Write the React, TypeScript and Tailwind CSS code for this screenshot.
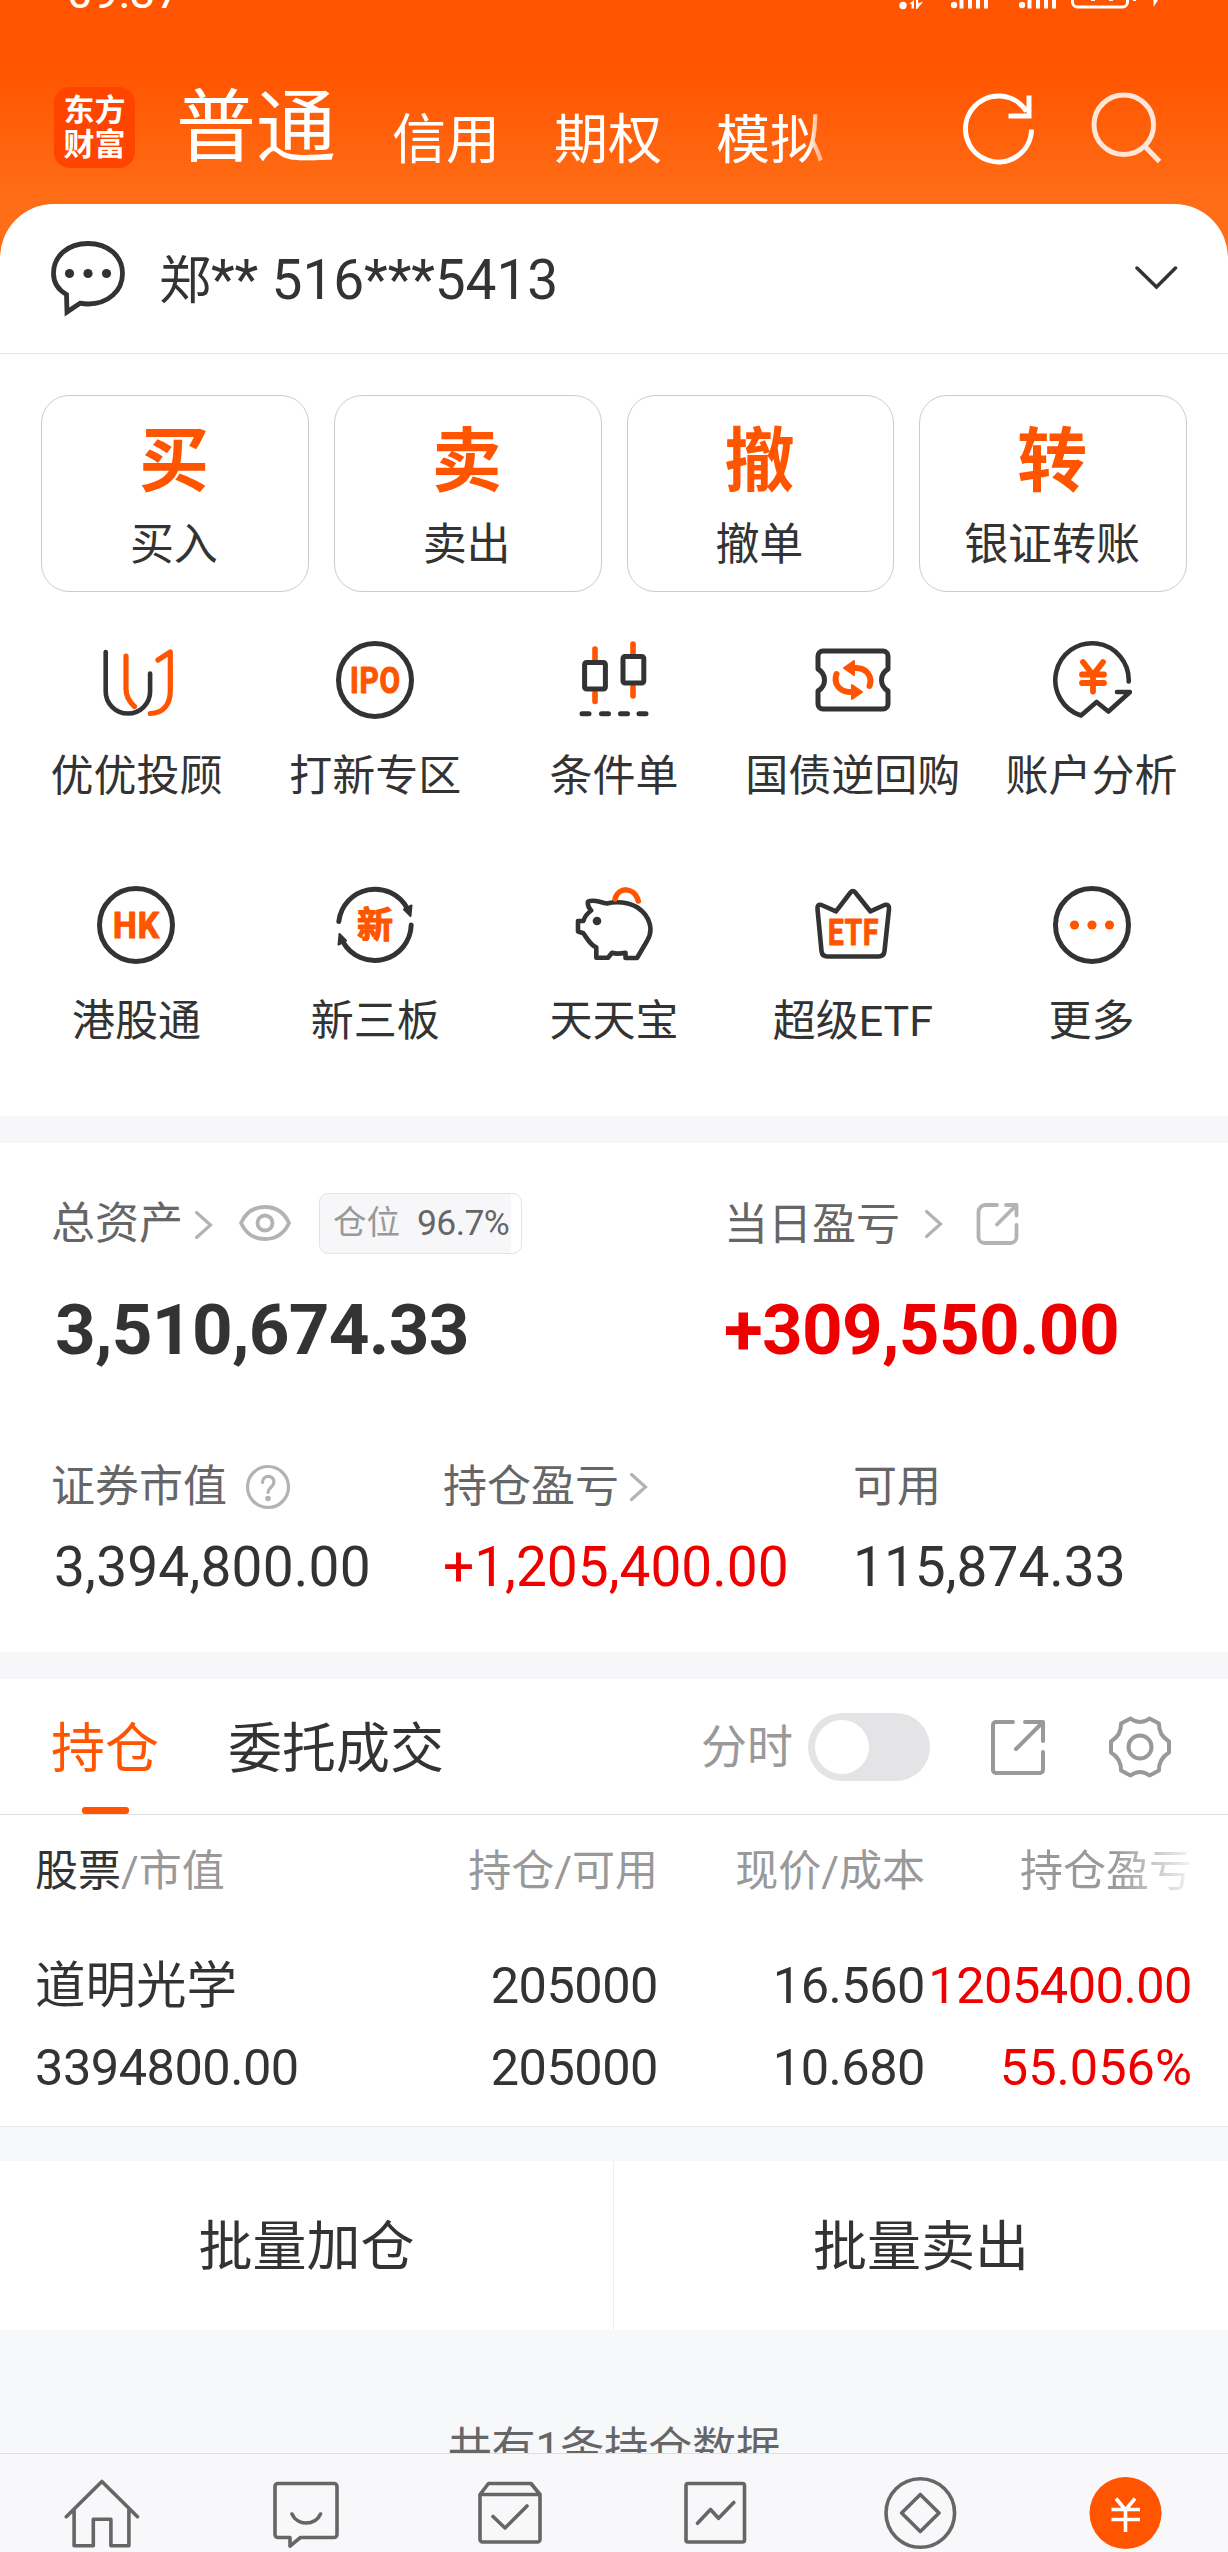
import type { ReactNode } from 'react'

const ORANGE = '#ff5500'
const DARK = '#333333'

function Icon({ children, stroke = DARK, width = 5 }: { children: ReactNode; stroke?: string; width?: number }) {
  return (
    <svg
      viewBox="0 0 80 80"
      className="w-20 h-20 shrink-0"
      fill="none"
      stroke={stroke}
      strokeWidth={width}
      strokeLinecap="round"
      strokeLinejoin="round"
    >
      {children}
    </svg>
  )
}

function IconText({ children, y, length, spacing = 0 }: { children: string; y: number; length: number; spacing?: number }) {
  return (
    <text
      x={40 + spacing / 2}
      y={y}
      textAnchor="middle"
      textLength={length}
      lengthAdjust="spacingAndGlyphs"
      letterSpacing={spacing}
      fontSize={36}
      fontWeight={700}
      fill={ORANGE}
      stroke={ORANGE}
      strokeWidth={1.2}
    >
      {children}
    </text>
  )
}

function ChevronRight() {
  return (
    <svg viewBox="0 0 20 32" className="w-5 h-8 shrink-0" fill="none" stroke="#b3b3b3" strokeWidth={3.2} strokeLinecap="round">
      <path d="M2.5 3.5 16.5 16 2.5 28.5" />
    </svg>
  )
}

const actions = [
  { mark: '买', label: '买入' },
  { mark: '卖', label: '卖出' },
  { mark: '撤', label: '撤单' },
  { mark: '转', label: '银证转账' },
]

const services = [
  {
    label: '优优投顾',
    icon: (
      <Icon width={4.6}>
        <path d="M9.7 12v39.5a22.2 22 0 0 0 44.4 0V33.5" />
        <path d="M30 16v33c0 8 3 12.5 8.5 17.5M62 20l12.3-8v39c0 13-7 22.5-20 22.5" stroke={ORANGE} strokeWidth={5.2} />
      </Icon>
    ),
  },
  {
    label: '打新专区',
    icon: (
      <Icon>
        <circle cx={40} cy={40} r={36.5} />
        <IconText y={53} length={51} spacing={1}>IPO</IconText>
      </Icon>
    ),
  },
  {
    label: '条件单',
    icon: (
      <Icon>
        <path d="M21 9v11M21 53v8.5M59 4v10M59 47v9" stroke={ORANGE} strokeWidth={5.6} />
        <rect x={10.6} y={22.5} width={20.8} height={26.5} rx={2} />
        <rect x={49} y={16.5} width={20.8} height={26.5} rx={2} />
        <path d="M8 73.7h7M27.5 73.7h7M46.5 73.7h7M65 73.7h7" />
      </Icon>
    ),
  },
  {
    label: '国债逆回购',
    icon: (
      <Icon>
        <path d="M10 11h60a5 5 0 0 1 5 5v13q-6.5 4-6.5 11t6.5 11v13a5 5 0 0 1-5 5H10a5 5 0 0 1-5-5V51q6.5-4 6.5-11T5 29V16a5 5 0 0 1 5-5z" />
        <g stroke={ORANGE} strokeWidth={6}>
          <path d="M40 28h3c10 0 17 8 13.5 18" />
          <path d="M31 28l10-7v14z" fill={ORANGE} strokeWidth={2} />
          <path d="M40 52h-3c-10 0-17-8-13.5-18" />
          <path d="M49 52l-10-7v14z" fill={ORANGE} strokeWidth={2} />
        </g>
      </Icon>
    ),
  },
  {
    label: '账户分析',
    icon: (
      <Icon width={4.6}>
        <path d="M76.7 41.5A36.7 37 0 1 0 29 75.5L44.6 62 56.4 71.5 78 52H65" />
        <path d="M31 22l10 13 10-13M30 34.5h22M30 43h22M41 35v16.5" stroke={ORANGE} strokeWidth={5.8} />
      </Icon>
    ),
  },
  {
    label: '港股通',
    icon: (
      <Icon>
        <circle cx={40} cy={40} r={36.5} />
        <IconText y={53} length={47} spacing={1}>HK</IconText>
      </Icon>
    ),
  },
  {
    label: '新三板',
    icon: (
      <Icon>
        <path d="M3.8 36.5A36.5 36.5 0 0 1 72 23M76.2 40A36.5 36.5 0 0 1 8 57" />
        <path d="M69 24.5 76.5 20.5 75.5 31zM11 55.5 3.5 59.5 4.5 49z" fill={DARK} strokeWidth={2} />
        <IconText y={53} length={36}>新</IconText>
      </Icon>
    ),
  },
  {
    label: '天天宝',
    icon: (
      <Icon width={4.6}>
        <path d="M14 16.5C20 14 26 17.5 33 18.5C42 16 55 17 63.5 22.5C76 31 80 45 73 56L63 73H51.5V67.8Q43 69.5 38 67.8L34 72.7H22.3V62.3C16 60 13 53 9.4 48.3L4 46.5V36H9.4Q11 30 17.2 25.5Q13 21 14 16.5z" />
        <path d="M41 14C44 2 60 1 64.3 16" stroke={ORANGE} strokeWidth={5.5} />
        <circle cx={23} cy={36} r={4.3} fill={DARK} stroke="none" />
      </Icon>
    ),
  },
  {
    label: '超级ETF',
    icon: (
      <Icon width={4.6}>
        <path d="M4.5 24q-.5-5 4-4L23 26.3 37.5 7.5q2.4-3 4.8 0L57.3 26.3 71.5 20q5-1 4.5 4L71.5 66q-.5 5.5-6 5.5h-51q-5.5 0-6-5.5z" />
        <IconText y={60} length={51} spacing={1}>ETF</IconText>
      </Icon>
    ),
  },
  {
    label: '更多',
    icon: (
      <Icon>
        <circle cx={40} cy={40} r={36.5} />
        <g fill={ORANGE} stroke="none">
          <circle cx={22.5} cy={40} r={4.6} />
          <circle cx={40} cy={40} r={4.6} />
          <circle cx={57.5} cy={40} r={4.6} />
        </g>
      </Icon>
    ),
  },
]

const navIcons = [
  <path key="home" d="M4.3 43.7 39.9 8.5 75.5 43.7M12.1 37v35.7h19.2V46.3h17.6v26.4h18V37" />,
  <path key="chat" d="M11 10.5h56a3 3 0 0 1 3 3v48a3 3 0 0 1-3 3H33.5L23 73v-8.5H11a3 3 0 0 1-3-3v-48a3 3 0 0 1 3-3zM25 41c5 12 23 12 28.5 0" />,
  <path key="box" d="M8 21.5h60v45a2.5 2.5 0 0 1-2.5 2.5h-55A2.5 2.5 0 0 1 8 66.5zL16.5 10.5h42.5L68 21.5M21 43.5 33 55 55 33" />,
  <path key="chart" d="M12 10.5h54.5a2 2 0 0 1 2 2V67a2 2 0 0 1-2 2H12a2 2 0 0 1-2-2V12.5a2 2 0 0 1 2-2zM21.5 50.3 34.5 36.5 42.5 45.3 57.8 29.5" />,
  <path key="diamond" d="M5 40a34.3 34.3 0 1 0 68.6 0a34.3 34.3 0 1 0-68.6 0zM39.3 21.5 58 40 39.3 58.5 20.6 40z" />,
]

function SignalBars() {
  return (
    <svg viewBox="0 0 38 10" className="w-[38px] h-[10px]" fill="white">
      <circle cx={3} cy={5} r={3.2} />
      <path d="M8.5 0h4v8.5h-4zM17 0h4v8.5h-4zM25 0h4v8.5h-4zM33 0h4v8.5h-4z" />
    </svg>
  )
}

function Header() {
  return (
    <header className="h-[260px] bg-[linear-gradient(to_bottom,#ff5500_0,#ff5500_70px,#ff6d17_200px)] text-white">
      <div className="flex items-end h-[10px] overflow-hidden pl-[67px] pr-[73px]">
        <span className="text-[46px] leading-[20px] h-[10px] -translate-y-[18px]">09:37</span>
        <svg viewBox="0 0 24 10" className="w-6 h-[10px] ml-auto mr-[28px]" fill="white">
          <circle cx={4} cy={5.5} r={3.7} />
          <path d="M10 4 15 0v8.5h-2.5V4zM17 0h2v3l5-1-6 7h-1z" />
        </svg>
        <SignalBars />
        <div className="w-[30px]" />
        <SignalBars />
        <svg viewBox="0 0 84 10" className="w-[84px] h-[10px] ml-[14px] overflow-visible" fill="none" stroke="white" strokeWidth={3}>
          <path d="M1.5-4v6a5 5 0 0 0 5 5h45a5 5 0 0 0 5-5v-6" />
          <path d="M20 0h4M38 0h4M62 0h3" strokeWidth={2} />
          <path d="M87 0 82.5 7V0z" fill="white" stroke="none" />
        </svg>
      </div>

      <div className="flex items-end h-[81px] mt-[77px] pl-[54px] pr-[64px]">
        <div className="w-[81px] h-[81px] rounded-[16px] bg-[#ff4400] pt-[7px] text-center text-[31px] leading-[34px] font-bold">
          东方
          <br />
          财富
        </div>
        <div className="flex items-end ml-[41px] leading-none">
          <span className="text-[80px]">普通</span>
          <span className="text-[54px] ml-[56px]">信用</span>
          <span className="text-[54px] ml-[54px]">期权</span>
          <span className="text-[54px] ml-[54px] [mask-image:linear-gradient(to_right,#000_86%,rgba(0,0,0,0.55)_94%)]">模拟</span>
        </div>
        <div className="flex ml-auto gap-[46px]">
          <Icon stroke="white">
            <path d="M73.5 41.5A33 33 0 1 1 68.5 23.5M71 7.5V28H50.5" strokeLinecap="butt" strokeLinejoin="miter" />
          </Icon>
          <Icon stroke="#ffe6d9">
            <path d="M60.5 58 75.5 73.5" strokeLinecap="butt" />
            <circle cx={39.8} cy={36.7} r={29.8} />
          </Icon>
        </div>
      </div>
    </header>
  )
}

function AccountBar() {
  return (
    <div className="flex items-center h-[150px] border-b border-[#e5e5e5] pl-[48px] pr-[50px]">
      <Icon width={4.8}>
        <path d="M18.5 55.5C8 49.5 5.5 41 5.5 34.5 5.5 17 20 4.5 40 4.5S74.5 17 74.5 34.5 60 65 40 65q-4 0-8-.8L19 73z" strokeLinejoin="miter" />
        <g fill={DARK} stroke="none">
          <circle cx={21.5} cy={34.5} r={4.6} />
          <circle cx={40} cy={34.5} r={4.6} />
          <circle cx={58.5} cy={34.5} r={4.6} />
        </g>
      </Icon>
      <span className="ml-[31px] pt-[4px] text-[55px] leading-[60px] tracking-[-0.1px]">
        <span className="text-[52px]">郑</span>** 516***5413
      </span>
      <svg viewBox="0 0 44 26" className="w-11 h-[26px] ml-auto" fill="none" stroke={DARK} strokeWidth={3.5} strokeLinecap="round">
        <path d="M3 2 22.5 21 41.5 2" />
      </svg>
    </div>
  )
}

function Assets() {
  return (
    <section className="h-[509px] bg-white pt-[50px]">
      <div className="flex">
        <div className="w-[724px] pl-[51px]">
          <div className="flex items-center h-[62px] text-[#666]">
            <span className="text-[44px] leading-[62px]">总资产</span>
            <span className="ml-[11px] mt-px"><ChevronRight /></span>
            <svg viewBox="0 0 54 38" className="w-[54px] h-[38px] ml-[24px] -mt-[2px]" fill="none" stroke="#b3b3b3" strokeWidth={3.8}>
              <path d="M3 19C8 8 17 3 27 3s19 5 24 16c-5 11-14 16-24 16S8 30 3 19z" strokeLinejoin="round" />
              <circle cx={27} cy={19} r={7.5} />
            </svg>
            <div className="flex items-center ml-[27px] w-[203px] h-[61px] -mt-px rounded-[9px] border border-[#e3e3e6] bg-[linear-gradient(to_right,#f7f7fa_95%,#ffffff_95%)] pl-[13px]">
              <span className="text-[33.5px] text-[#999]">仓位</span>
              <span className="text-[35.5px] tracking-[-0.6px] ml-[17px]">96.7%</span>
            </div>
          </div>
          <div className="mt-[39px] pl-[4px] text-[71px] leading-[72px] tracking-[-0.7px] font-bold">3,510,674.33</div>
        </div>
        <div>
          <div className="flex items-center h-[62px] text-[44px] text-[#666]">
            <span className="leading-[62px] pt-[2px]">当日盈亏</span>
            <span className="ml-[24px] -mt-px"><ChevronRight /></span>
            <svg viewBox="0 0 44 44" className="w-11 h-11 ml-[31px] -mt-[2px]" fill="none" stroke="#b3b3b3" strokeWidth={3.8} strokeLinecap="round" strokeLinejoin="round">
              <path d="M22 4H10.5A7 7 0 0 0 3.5 11v25a6 6 0 0 0 6 6h26a6 6 0 0 0 6-6V24M31 4h10.5v10.5M41 4.5 22 23.5" />
            </svg>
          </div>
          <div className="mt-[39px] text-[71px] leading-[72px] tracking-[-0.7px] font-bold text-[#ee0000]">+309,550.00</div>
        </div>
      </div>

      <div className="flex mt-[90px] pl-[51px] text-[55px]">
        <div className="w-[392px]">
          <div className="flex items-center h-[62px] text-[44px] text-[#666]">
            证券市值
            <svg viewBox="0 0 46 46" className="w-[46px] h-[46px] ml-[18px]" fill="none" stroke="#b3b3b3" strokeWidth={3.2} strokeLinecap="round">
              <circle cx={23} cy={23} r={20.5} />
              <path d="M17.5 18.5c0-8 11.5-8 11.5-.5 0 5-6 5.5-6 10.5" />
              <circle cx={23} cy={34.5} r={1.2} fill="#b3b3b3" />
            </svg>
          </div>
          <div className="mt-[14px] pl-[3px] leading-[70px] tracking-[0.2px]">3,394,800.00</div>
        </div>
        <div className="w-[410px]">
          <div className="flex items-center h-[62px] text-[44px] text-[#666]">
            持仓盈亏
            <span className="ml-[10px]"><ChevronRight /></span>
          </div>
          <div className="mt-[14px] leading-[70px] text-[#ee0000]">+1,205,400.00</div>
        </div>
        <div>
          <div className="flex items-center h-[62px] text-[44px] text-[#666]">可用</div>
          <div className="mt-[14px] leading-[70px]">115,874.33</div>
        </div>
      </div>
    </section>
  )
}

function Holdings() {
  return (
    <section className="bg-white">
      <div className="flex h-[136px] border-b border-[#dddde0] pl-[51px] pr-[48px] text-[54px]">
        <div className="w-[108px] flex flex-col items-center text-[#ff5500]">
          <span className="leading-[128px] pt-[7px] h-[128px]">持仓</span>
          <span className="w-[47px] h-[7px] rounded-[3px] bg-[#ff5500]" />
        </div>
        <span className="ml-[69px] pt-[7px] leading-[128px]">委托成交</span>
        <div className="flex items-center ml-auto">
          <span className="text-[46px] pt-[2px] text-[#999]">分时</span>
          <div className="flex items-center w-[122px] h-[68px] ml-[15px] rounded-full bg-[#e4e4e6] pl-[7px]">
            <span className="w-[54px] h-[54px] rounded-full bg-white" />
          </div>
          <span className="ml-[48px]">
            <Icon stroke="#999999" width={4}>
              <path d="M35 15H18a3 3 0 0 0-3 3v45a3 3 0 0 0 3 3h44a3 3 0 0 0 3-3V45M47 15h18v19M64.5 15.5 38 42" />
            </Icon>
          </span>
          <span className="ml-[42px]">
            <Icon stroke="#999999" width={4}>
              <path d="M30.5 11.5Q40 18.5 49.5 11.5L59 16.5Q58.5 28 69 34.5V45.5Q58.5 52 59 63.5L49.5 68.5Q40 61.5 30.5 68.5L21 63.5Q21.5 52 11 45.5V34.5Q21.5 28 21 16.5z" />
              <circle cx={40} cy={40} r={11.5} />
            </Icon>
          </span>
        </div>
      </div>

      <div className="grid grid-cols-[300px_323px_267px_267px] h-[109px] items-center pt-[3px] pl-[35px] text-[43px] text-[#999] text-right">
        <span className="text-left"><span className="text-[#333]">股票</span>/市值</span>
        <span>持仓/可用</span>
        <span>现价/成本</span>
        <span>
          <span className="[mask-image:linear-gradient(to_right,#000_55%,rgba(0,0,0,0.1)_100%)]">持仓盈亏</span>
        </span>
      </div>
      <div className="grid grid-cols-[300px_323px_267px_267px] h-[203px] content-start pt-[21px] pl-[35px] text-[50.5px] leading-[82px] tracking-[-0.5px] text-right border-b border-[#e8eaed]">
        <span className="text-left tracking-normal">道明光学</span>
        <span>205000</span>
        <span>16.560</span>
        <span className="text-[#ee0000]">1205400.00</span>
        <span className="text-left">3394800.00</span>
        <span>205000</span>
        <span>10.680</span>
        <span className="text-[#ee0000] tracking-normal">55.056%</span>
      </div>
    </section>
  )
}

export default function App() {
  return (
    <div className="w-[1228px] h-[2552px] flex flex-col overflow-hidden bg-[#f7f8fa] text-[#333] font-['Roboto','Noto_Sans_CJK_SC',sans-serif]">
      <Header />

      <section className="relative -mt-[56px] h-[912px] shrink-0 rounded-t-[54px] bg-white">
        <AccountBar />

        <div className="grid grid-cols-4 gap-[25px] px-[41px] mt-[41px]">
          {actions.map(a => (
            <div key={a.label} className="h-[197px] rounded-[28px] border border-[#cccccc] flex flex-col items-center pt-[26px] pr-[2px]">
              <span className="text-[70px] leading-[80px] font-bold text-[#ff5500]">{a.mark}</span>
              <span className="text-[44px] leading-[60px] mt-[13px]">{a.label}</span>
            </div>
          ))}
        </div>

        <div className="grid grid-cols-5 px-[17px] mt-[48px]">
          {services.map(s => (
            <div key={s.label} className="h-[245px] flex flex-col items-center">
              {s.icon}
              <span className="text-[43px] leading-[60px] mt-[26px] whitespace-nowrap">{s.label}</span>
            </div>
          ))}
        </div>
      </section>

      <div className="h-[27px] shrink-0 bg-[#f7f7fa]" />
      <Assets />
      <div className="h-[27px] shrink-0 bg-[#f7f7fa]" />
      <Holdings />

      <div className="flex h-[169px] shrink-0 mt-[34px] bg-white text-[54px]">
        <div className="w-[614px] pt-[4px] border-r border-[#eeeff2] flex items-center justify-center">批量加仓</div>
        <div className="flex-1 pt-[4px] flex items-center justify-center">批量卖出</div>
      </div>

      <div className="h-[123px] shrink-0 overflow-hidden pt-[89px] text-center text-[44px] leading-[60px] text-[#666]">共有1条持仓数据</div>

      <nav className="grid grid-cols-6 h-[99px] shrink-0 border-t border-[#e0e0e3] bg-[#f8f8fa] pt-[19px] justify-items-center">
        {navIcons.map(icon => (
          <Icon key={icon.key} stroke="#666666" width={3.6}>{icon}</Icon>
        ))}
        <Icon stroke="white" width={3.6}>
          <circle cx={39.5} cy={40} r={36} fill={ORANGE} stroke="none" />
          <path d="M30 25.5 39.5 37 49 25.5M25.5 36.5h28.5M25.5 46.5h28.5M39.5 37v22" strokeLinecap="butt" />
        </Icon>
      </nav>
    </div>
  )
}
